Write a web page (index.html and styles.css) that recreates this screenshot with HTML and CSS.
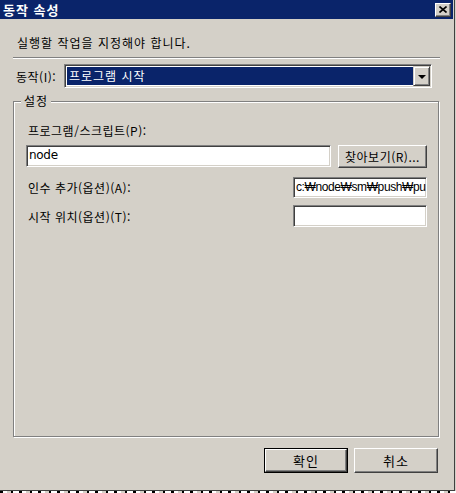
FILE: index.html
```html
<!DOCTYPE html>
<html lang="ko">
<head>
<meta charset="utf-8">
<title>동작 속성</title>
<link rel="stylesheet" href="styles.css">
</head>
<body>
<div class="window">
  <div class="titlebar">
    <span class="title">동작 속성</span>
    <span class="close-btn">
      <svg width="8" height="7" viewBox="0 0 8 7"><path d="M0.5 0.5 L7.5 6.5 M7.5 0.5 L0.5 6.5" stroke="#000" stroke-width="1.6" fill="none"/></svg>
    </span>
  </div>
  <div class="intro">실행할 작업을 지정해야 합니다.</div>
  <div class="separator"></div>
  <div class="action-row">
    <span class="action-label">동작(<u>I</u>):</span>
    <div class="select">
      <div class="select-value">프로그램 시작</div>
      <div class="drop-btn"><span class="tri"></span></div>
    </div>
  </div>
  <div class="group">
    <span class="legend">설정</span>
    <div class="field-label first">프로그램/스크립트(<u>P</u>):</div>
    <div class="row prog-row">
      <div class="textbox prog-box">node</div>
      <div class="button browse">찾아보기(<u>R</u>)...</div>
    </div>
    <div class="row args-row">
      <span class="row-label">인수 추가(옵션)(<u>A</u>):</span>
      <div class="textbox small-box args-box">c:₩node₩sm₩push₩pu</div>
    </div>
    <div class="row start-row">
      <span class="row-label">시작 위치(옵션)(<u>T</u>):</span>
      <div class="textbox small-box start-box"></div>
    </div>
  </div>
  <div class="buttons">
    <div class="default-wrap"><div class="button dlg-btn">확인</div></div>
    <div class="button dlg-btn">취소</div>
  </div>
</div>
<div class="under-strip"></div>
</body>
</html>
```

FILE: styles.css
```css
html, body {
  margin: 0;
  padding: 0;
}
body {
  width: 456px;
  height: 493px;
  overflow: hidden;
  background: #d4d0c8;
  font-family: "Noto Sans CJK KR", "Noto Sans", "DejaVu Sans", sans-serif;
  font-size: 12px;
  color: #000;
}
u { text-decoration: none; }

.window {
  width: 454px;
  height: 490px;
  background: #d4d0c8;
  border-right: 1px solid #404040;
  border-bottom: 1px solid #404040;
  display: flex;
  flex-direction: column;
}

.titlebar {
  height: 19px;
  width: 453px;
  background: #0a246a;
  display: flex;
  align-items: center;
  justify-content: space-between;
  padding: 0 2px 0 3px;
  box-sizing: border-box;
}
.title {
  color: #fff;
  font-weight: bold;
  font-size: 13px;
  letter-spacing: 1px;
  line-height: 19px;
}
.close-btn {
  width: 16px;
  height: 14px;
  box-sizing: border-box;
  background: #d4d0c8;
  border: 1px solid;
  border-color: #fff #404040 #404040 #fff;
  box-shadow: inset -1px -1px 0 #808080;
  display: flex;
  align-items: center;
  justify-content: center;
  margin-top: 1px;
}
.close-btn svg { display: block; margin: 0 1px 1px 0; }

.intro {
  margin: 17px 0 0 17px;
  height: 13px;
  line-height: 13px;
  letter-spacing: 1px;
}

.separator {
  margin: 8px 0 0 13px;
  width: 427px;
  height: 0;
  border-top: 1px solid #808080;
  border-bottom: 1px solid #fff;
}

.action-row {
  margin-top: 5px;
  height: 24px;
  display: flex;
  align-items: center;
}
.action-label {
  margin-left: 16px;
  width: 48px;
  letter-spacing: 0.5px;
}
.select {
  width: 368px;
  height: 24px;
  box-sizing: border-box;
  border: 1px solid;
  border-color: #808080 #fff #fff #808080;
  box-shadow: inset 1px 1px 0 #404040, inset -1px -1px 0 #d4d0c8;
  background: #fff;
  padding: 1px;
  display: flex;
}
.select-value {
  flex: 1;
  margin: 1px 0 1px 1px;
  background: #0a246a;
  color: #fff;
  letter-spacing: 1px;
  line-height: 18px;
  padding-left: 2px;
}
.drop-btn {
  width: 17px;
  height: 20px;
  box-sizing: border-box;
  background: #d4d0c8;
  border: 1px solid;
  border-color: #d4d0c8 #404040 #404040 #d4d0c8;
  box-shadow: inset 1px 1px 0 #fff, inset -1px -1px 0 #808080;
  display: flex;
  align-items: center;
  justify-content: center;
}
.tri {
  width: 0;
  height: 0;
  border-left: 4px solid transparent;
  border-right: 4px solid transparent;
  border-top: 4px solid #000;
  margin-top: 1px;
}

.group {
  position: relative;
  margin: 13px 0 0 13px;
  width: 426px;
  height: 336px;
  box-sizing: border-box;
  border: 1px solid #808080;
  box-shadow: inset 1px 1px 0 #fff, 1px 1px 0 #fff;
  padding: 0 11px 0 12px;
}
.legend {
  position: absolute;
  left: 7px;
  top: -8px;
  padding: 0 3px;
  background: #d4d0c8;
  line-height: 14px;
  letter-spacing: 1px;
}

.field-label {
  margin: 22px 0 0 2px;
  height: 13px;
  line-height: 13px;
  letter-spacing: 0.5px;
}

.row {
  display: flex;
  align-items: center;
  justify-content: space-between;
}
.prog-row {
  margin-top: 8px;
  height: 23px;
}
.args-row {
  margin-top: 9px;
  height: 21px;
}
.start-row {
  margin-top: 7px;
  height: 22px;
}
.row-label {
  margin-left: 2px;
  letter-spacing: 0.5px;
}

.textbox {
  box-sizing: border-box;
  background: #fff;
  border: 1px solid;
  border-color: #808080 #fff #fff #808080;
  box-shadow: inset 1px 1px 0 #404040, inset -1px -1px 0 #d4d0c8;
  padding: 0 2px;
  white-space: nowrap;
  overflow: hidden;
  font-family: "DejaVu Sans", "Noto Sans CJK KR", sans-serif;
  font-size: 12px;
  letter-spacing: -0.3px;
}
.prog-box {
  width: 305px;
  height: 22px;
  line-height: 19px;
  align-self: flex-start;
}
.small-box {
  width: 134px;
  height: 21px;
  line-height: 19px;
}
.args-box {
  font-family: "Liberation Sans", "Noto Sans CJK KR", sans-serif;
  letter-spacing: -0.4px;
}
.start-box {
  height: 22px;
}

.button {
  box-sizing: border-box;
  background: #d4d0c8;
  border: 1px solid;
  border-color: #fff #404040 #404040 #fff;
  box-shadow: inset -1px -1px 0 #808080;
  display: flex;
  align-items: center;
  justify-content: center;
  letter-spacing: 0.5px;
}
.browse {
  width: 89px;
  height: 23px;
}

.buttons {
  margin-top: 11px;
  display: flex;
  justify-content: flex-end;
  gap: 6px;
  padding-right: 16px;
}
.default-wrap {
  border: 1px solid #000;
  width: 84px;
  height: 25px;
  box-sizing: border-box;
}
.default-wrap .dlg-btn {
  width: 82px;
  height: 23px;
}
.dlg-btn {
  width: 84px;
  height: 25px;
  font-size: 13px;
  letter-spacing: 1px;
}

.under-strip {
  height: 2px;
  width: 456px;
  background: repeating-linear-gradient(90deg, #000 0 3px, #fff 3px 7px, #d4d0c8 7px 11px, #000 11px 13px, #fff 13px 19px);
}
```
